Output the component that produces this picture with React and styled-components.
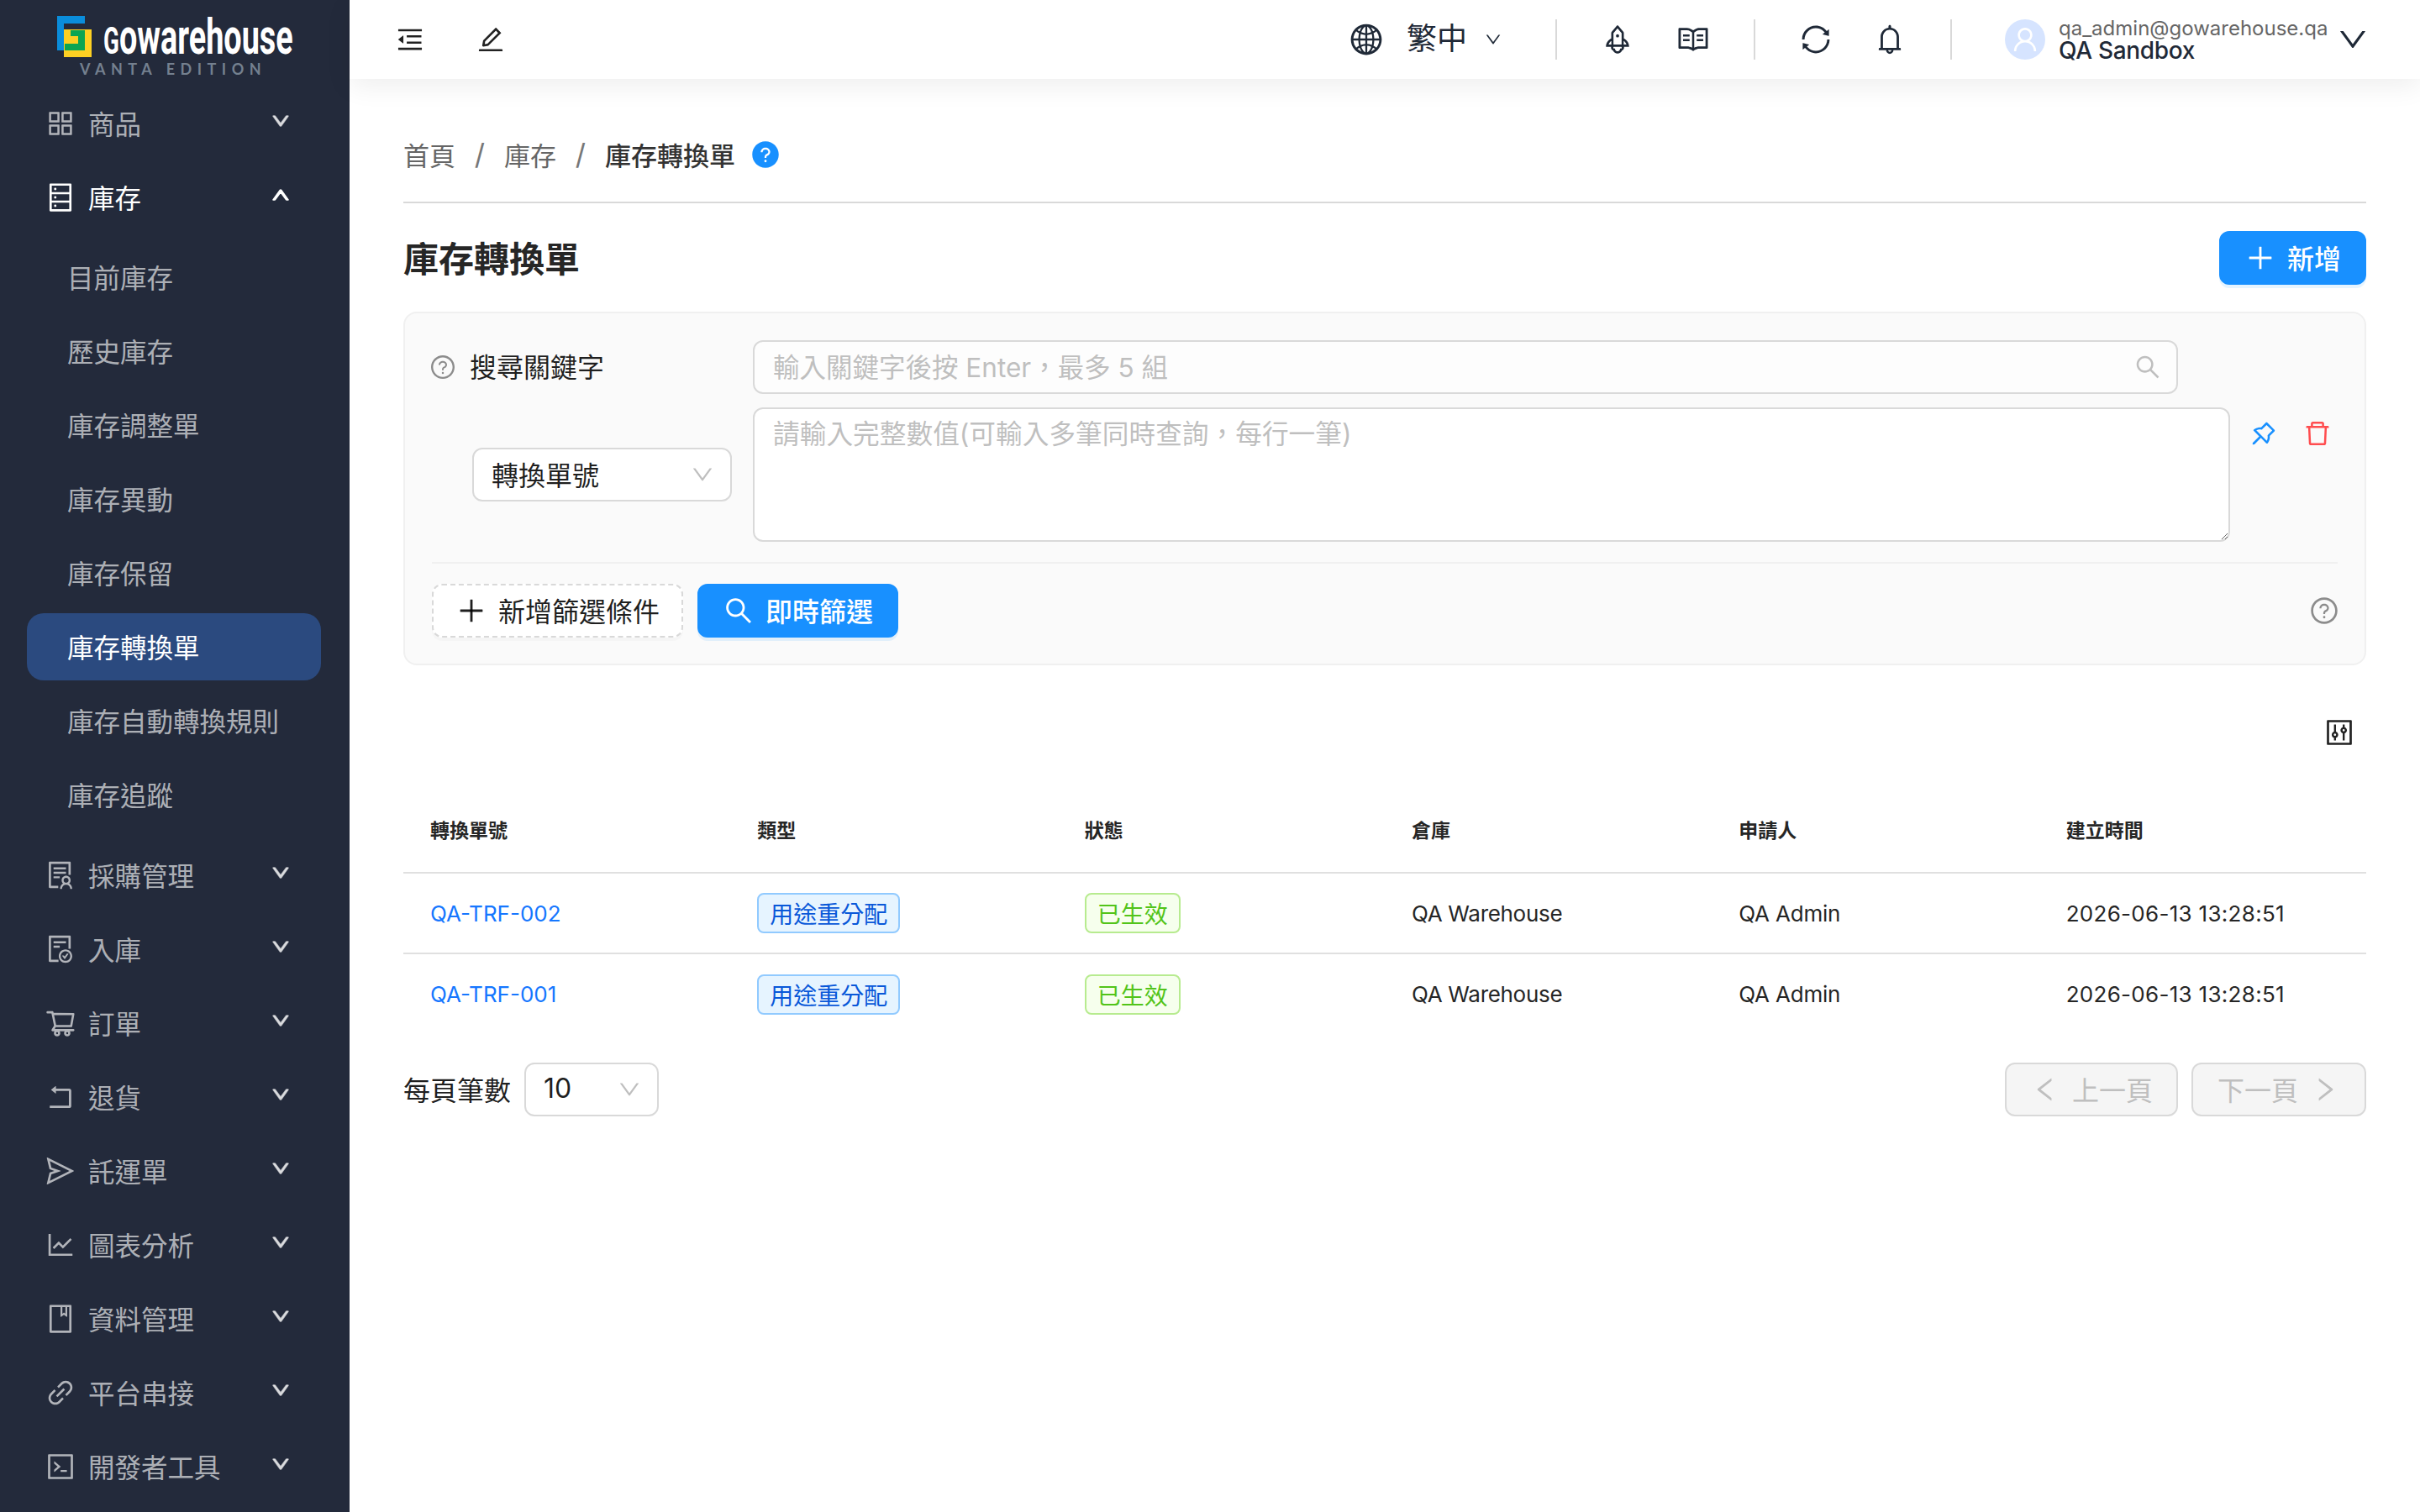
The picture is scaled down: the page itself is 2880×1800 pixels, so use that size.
import styled, { createGlobalStyle } from "styled-components";
import {
  AiOutlineAppstore,
  AiOutlineDatabase,
  AiOutlineSolution,
  AiOutlineFileDone,
  AiOutlineShoppingCart,
  AiOutlineRollback,
  AiOutlineSend,
  AiOutlineLineChart,
  AiOutlineBook,
  AiOutlineLink,
  AiOutlineCode,
  AiOutlineDown,
  AiOutlineUp,
  AiOutlineLeft,
  AiOutlineRight,
  AiOutlineMenuFold,
  AiOutlineEdit,
  AiOutlineGlobal,
  AiOutlineRocket,
  AiOutlineRead,
  AiOutlineSync,
  AiOutlineBell,
  AiOutlineUser,
  AiOutlineQuestionCircle,
  AiFillQuestionCircle,
  AiOutlinePlus,
  AiOutlineSearch,
  AiOutlinePushpin,
  AiOutlineDelete,
  AiOutlineControl,
} from "react-icons/ai";

const GlobalStyle = createGlobalStyle`
  * { box-sizing: border-box; }
  body {
    margin: 0;
    background: #fff;
    font-family: Inter, "Noto Sans CJK TC", sans-serif;
    color: rgba(0, 0, 0, 0.88);
  }
  svg { flex-shrink: 0; display: block; }
`;

const Layout = styled.div`
  display: flex;
  height: 100vh;
  overflow: hidden;
`;

const Sidebar = styled.aside`
  width: 416px;
  flex-shrink: 0;
  background: #232a3b;
  overflow: hidden;
`;

const LogoBlock = styled.div`
  height: 107px;
  padding: 19px 0 0 68px;
`;

const LogoRow = styled.div`
  display: flex;
  gap: 14px;
  height: 50px;
`;

const Wordmark = styled.div`
  width: 226px;
  height: 50px;
  font-family: Roboto, sans-serif;
  font-weight: 700;
  font-size: 60px;
  line-height: 50px;
  color: #fff;
  white-space: nowrap;
  transform: scaleX(0.63);
  transform-origin: left center;
  span { font-size: 44px; }
`;

const Edition = styled.div`
  margin: 5px 0 0 27px;
  font-family: Lato, sans-serif;
  font-weight: 700;
  font-size: 18px;
  line-height: 16px;
  letter-spacing: 6.5px;
  color: #74808f;
  white-space: nowrap;
`;

const Menu = styled.nav`
  display: flex;
  flex-direction: column;
  gap: 8px;
`;

const MenuItem = styled.div`
  height: 80px;
  flex-shrink: 0;
  display: flex;
  align-items: center;
  padding: 0 70px 0 58px;
  font-size: 31.5px;
  color: ${(p) => (p.$open ? "#fff" : "rgba(255, 255, 255, 0.65)")};
`;

const MenuIcon = styled.span`
  display: flex;
  width: 28px;
  margin-right: 19px;
  justify-content: center;
  font-size: 38px;
`;

const MenuLabel = styled.span`
  flex: 1;
  padding-bottom: 3px;
`;

const Caret = styled.span`
  display: flex;
  font-size: 24px;
  margin-top: -6px;
  svg {
    stroke: currentColor;
    stroke-width: 70;
  }
`;

const SubMenu = styled.div`
  display: flex;
  flex-direction: column;
  gap: 8px;
  margin: 15px 0 16px;
`;

const SubItem = styled.div`
  height: 80px;
  margin: 0 34px 0 32px;
  padding: 0 0 3px 48px;
  display: flex;
  align-items: center;
  font-size: 31.5px;
  border-radius: 20px;
  color: ${(p) => (p.$active ? "#fff" : "rgba(255, 255, 255, 0.65)")};
  background: ${(p) => (p.$active ? "#2b4a7f" : "transparent")};
`;

const Main = styled.main`
  flex: 1;
  min-width: 0;
  display: flex;
  flex-direction: column;
`;

const TopBar = styled.header`
  height: 94px;
  flex-shrink: 0;
  display: flex;
  align-items: center;
  padding: 0 60px 0 54px;
  background: #fff;
  box-shadow: 0 8px 32px rgba(0, 0, 0, 0.07);
  color: #1f2937;
`;

const TopIcons = styled.div`
  display: flex;
  align-items: center;
  gap: 60px;
  font-size: 36px;
  color: #222;
`;

const TopRight = styled.div`
  margin-left: auto;
  display: flex;
  align-items: center;
`;

const Lang = styled.div`
  display: flex;
  align-items: center;
  margin-right: 11px;
  font-size: 36px;
`;

const LangText = styled.span`
  margin: 0 20px 0 27px;
  line-height: 48px;
  padding-bottom: 3px;
`;

const BarDivider = styled.div`
  width: 2px;
  height: 48px;
  margin: 0 52px;
  background: #d9d9d9;
`;

const IconGroup = styled.div`
  display: flex;
  gap: ${(p) => p.$gap}px;
  font-size: 40px;
  color: #1f2937;
`;

const Avatar = styled.div`
  width: 48px;
  height: 48px;
  margin: 0 16px 0 11px;
  border-radius: 50%;
  background: #d6e4ff;
  color: #fff;
  display: flex;
  align-items: center;
  justify-content: center;
  font-size: 36px;
`;

const UserInfo = styled.div`
  width: 318px;
  white-space: nowrap;
`;

const UserMail = styled.div`
  font-size: 24px;
  line-height: 26px;
  color: #666;
`;

const UserName = styled.div`
  font-size: 28px;
  font-weight: 500;
  line-height: 27px;
  letter-spacing: -0.3px;
  color: #1f2937;
`;

const UserCaret = styled.span`
  display: flex;
  margin-left: 12px;
  font-size: 40px;
  color: #1f2937;
`;

const Content = styled.div`
  padding: 0 64px;
`;

const Breadcrumb = styled.div`
  display: flex;
  align-items: center;
  height: 148px;
  padding-top: 33px;
  border-bottom: 2px solid #d9d9d9;
  font-size: 31px;
  color: #666;
`;

const Crumb = styled.span`
  font-weight: ${(p) => (p.$current ? 500 : 400)};
  color: ${(p) => (p.$current ? "#333" : "#666")};
`;

const Slash = styled.span`
  width: 58px;
  text-align: center;
  font-family: Inter, sans-serif;
  font-size: 34px;
  color: #777;
`;

const HelpDot = styled.span`
  display: flex;
  margin-left: 18px;
  font-size: 36px;
  color: #1890ff;
`;

const TitleRow = styled.div`
  display: flex;
  align-items: center;
  justify-content: space-between;
  margin-top: 33px;
  height: 64px;
`;

const Title = styled.h1`
  margin: -4px 0 0;
  font-size: 42px;
  font-weight: 700;
  color: #262626;
`;

const Button = styled.button`
  height: 64px;
  display: inline-flex;
  align-items: center;
  gap: 13px;
  padding: 0 ${(p) => p.$pad || 28}px 3px;
  font-family: inherit;
  font-size: 32px;
  font-weight: ${(p) => (p.$primary ? 500 : 400)};
  border-radius: 12px;
  cursor: pointer;
  white-space: nowrap;
  ${(p) =>
    p.$primary
      ? `
    border: 2px solid #1890ff;
    background: #1890ff;
    color: #fff;
    box-shadow: 0 4px 0 rgba(5, 145, 255, 0.1);
  `
      : `
    border: 2px dashed #d9d9d9;
    background: #fff;
    color: rgba(0, 0, 0, 0.88);
    box-shadow: 0 4px 0 rgba(0, 0, 0, 0.02);
  `}
  svg { font-size: 38px; margin-top: 3px; }
`;

const FilterCard = styled.section`
  margin-top: 32px;
  padding: 32px 32px 32px;
  height: 421px;
  background: #fafafa;
  border: 2px solid #f0f0f0;
  border-radius: 16px;
`;

const FieldGrid = styled.div`
  display: grid;
  grid-template-columns: 382px 1fr;
  row-gap: 16px;
`;

const KeywordLabel = styled.div`
  display: flex;
  align-items: center;
  font-size: 32px;
  color: rgba(0, 0, 0, 0.88);
`;

const LabelText = styled.span`
  padding-bottom: 4px;
`;

const HintIcon = styled.span`
  display: flex;
  margin: 0 16px 0 -3px;
  font-size: 32px;
  color: #8c8c8c;
`;

const SearchField = styled.div`
  width: 1696px;
  height: 64px;
  padding: 0 17px 0 22px;
  display: flex;
  align-items: center;
  background: #fdfdfd;
  border: 2px solid #d9d9d9;
  border-radius: 12px;
  color: #bfbfbf;
  font-size: 34px;
`;

const SearchInput = styled.input`
  flex: 1;
  min-width: 0;
  padding: 0;
  border: 0;
  outline: 0;
  background: transparent;
  font-family: inherit;
  font-size: 31.5px;
  &::placeholder { color: #bfbfbf; opacity: 1; }
`;

const SelectBox = styled.div`
  width: ${(p) => p.$width}px;
  height: 64px;
  flex-shrink: 0;
  display: flex;
  align-items: center;
  justify-content: space-between;
  padding: 0 18px 3px 21px;
  background: #fff;
  border: 2px solid #d9d9d9;
  border-radius: 12px;
  font-size: 32px;
  svg { font-size: 30px; color: #bfbfbf; margin-top: 3px; }
`;

const SelectCell = styled.div`
  display: flex;
  align-items: center;
  padding-left: 48px;
`;

const ValueCell = styled.div`
  display: flex;
`;

const ValueArea = styled.textarea`
  width: 1758px;
  height: 160px;
  padding: 6px 22px;
  background: #fff;
  border: 2px solid #d9d9d9;
  border-radius: 12px;
  outline: 0;
  resize: vertical;
  font-family: inherit;
  font-size: 31.7px;
  line-height: 48px;
  &::placeholder { color: #bfbfbf; opacity: 1; }
`;

const RowActions = styled.div`
  display: flex;
  gap: 28px;
  margin: 13px 0 0 22px;
  font-size: 36px;
`;

const PinIcon = styled(AiOutlinePushpin)`
  color: #1890ff;
`;

const TrashIcon = styled(AiOutlineDelete)`
  color: #ff4d4f;
`;

const Separator = styled.div`
  height: 2px;
  margin: 24px 0 24px;
  background: #f0f0f0;
`;

const ActionRow = styled.div`
  display: flex;
  align-items: center;
  gap: 17px;
`;

const ActionHint = styled.span`
  display: flex;
  margin: 0 -2px 0 auto;
  font-size: 36px;
  color: #8c8c8c;
`;

const TableTools = styled.div`
  display: flex;
  justify-content: flex-end;
  margin-top: 61px;
  padding-right: 13px;
  font-size: 38px;
  color: #222;
`;

const Table = styled.table`
  width: 100%;
  margin-top: 50px;
  border-collapse: collapse;
  table-layout: fixed;
`;

const HeadCell = styled.th`
  height: 98px;
  padding: 0 32px 6px;
  text-align: left;
  font-size: 23px;
  font-weight: 700;
  color: #262626;
  border-bottom: 2px solid #e0e0e0;
`;

const Cell = styled.td`
  height: 96px;
  padding: 0 32px;
  font-size: 26px;
  letter-spacing: ${(p) => p.$spacing || 0}px;
  color: #262626;
`;

const Row = styled.tr`
  & + & td { border-top: 2px solid #e0e0e0; }
`;

const CodeLink = styled.a`
  color: #1677ff;
  text-decoration: none;
`;

const Tag = styled.span`
  display: inline-flex;
  align-items: center;
  height: 48px;
  padding: 0 13px;
  font-size: 28px;
  border-radius: 8px;
  border: 2px solid ${(p) => (p.$tone === "green" ? "#b7eb8f" : "#91caff")};
  background: ${(p) => (p.$tone === "green" ? "#f6ffed" : "#e6f4ff")};
  color: ${(p) => (p.$tone === "green" ? "#52c41a" : "#0958d9")};
`;

const Pagination = styled.div`
  display: flex;
  align-items: center;
  margin-top: 34px;
`;

const PageSizeLabel = styled.span`
  margin-right: 16px;
  padding-bottom: 3px;
  font-size: 32px;
`;

const PageButtons = styled.div`
  display: flex;
  gap: 16px;
  margin-left: auto;
`;

const PageButton = styled.button`
  width: ${(p) => p.$width}px;
  height: 64px;
  display: flex;
  align-items: center;
  justify-content: center;
  gap: 14px;
  padding: 0 0 3px;
  font-family: inherit;
  font-size: 32px;
  color: #bfbfbf;
  background: #f5f5f5;
  border: 2px solid #d9d9d9;
  border-radius: 12px;
  svg { font-size: 36px; margin-top: 3px; }
`;

const menuTop = [{ label: "商品", icon: AiOutlineAppstore }];

const subItems = [
  "目前庫存",
  "歷史庫存",
  "庫存調整單",
  "庫存異動",
  "庫存保留",
  "庫存轉換單",
  "庫存自動轉換規則",
  "庫存追蹤",
];

const menuRest = [
  { label: "採購管理", icon: AiOutlineSolution },
  { label: "入庫", icon: AiOutlineFileDone },
  { label: "訂單", icon: AiOutlineShoppingCart },
  { label: "退貨", icon: AiOutlineRollback },
  { label: "託運單", icon: AiOutlineSend },
  { label: "圖表分析", icon: AiOutlineLineChart },
  { label: "資料管理", icon: AiOutlineBook },
  { label: "平台串接", icon: AiOutlineLink },
  { label: "開發者工具", icon: AiOutlineCode },
];

const columns = ["轉換單號", "類型", "狀態", "倉庫", "申請人", "建立時間"];

const rows = [
  { code: "QA-TRF-002", time: "2026-06-13 13:28:51" },
  { code: "QA-TRF-001", time: "2026-06-13 13:28:51" },
];

function LogoMark() {
  return (
    <svg width="41" height="49" viewBox="68 19 41 49">
      <rect x="76" y="35" width="33" height="33" fill="#fdd023" />
      <path d="M68 19h33v9H76v32h-8z" fill="#0a8ddb" />
      <path d="M84 36h17v24H77v-8h16v-9h-9z" fill="#0ba552" />
    </svg>
  );
}

function NavItem({ item, open }) {
  const Icon = item.icon;
  return (
    <MenuItem $open={open}>
      <MenuIcon>
        <Icon />
      </MenuIcon>
      <MenuLabel>{item.label}</MenuLabel>
      <Caret>{open ? <AiOutlineUp /> : <AiOutlineDown />}</Caret>
    </MenuItem>
  );
}

export default function App() {
  return (
    <>
      <GlobalStyle />
      <Layout>
        <Sidebar>
          <LogoBlock>
            <LogoRow>
              <LogoMark />
              <Wordmark>
                <span>G</span>owarehouse
              </Wordmark>
            </LogoRow>
            <Edition>VANTA EDITION</Edition>
          </LogoBlock>
          <Menu>
            {menuTop.map((item) => (
              <NavItem key={item.label} item={item} />
            ))}
            <NavItem open item={{ label: "庫存", icon: AiOutlineDatabase }} />
          </Menu>
          <SubMenu>
            {subItems.map((label) => (
              <SubItem key={label} $active={label === "庫存轉換單"}>
                {label}
              </SubItem>
            ))}
          </SubMenu>
          <Menu>
            {menuRest.map((item) => (
              <NavItem key={item.label} item={item} />
            ))}
          </Menu>
        </Sidebar>

        <Main>
          <TopBar>
            <TopIcons>
              <AiOutlineMenuFold />
              <AiOutlineEdit />
            </TopIcons>
            <TopRight>
              <Lang>
                <AiOutlineGlobal size={42} />
                <LangText>繁中</LangText>
                <AiOutlineDown size={22} />
              </Lang>
              <BarDivider />
              <IconGroup $gap={50}>
                <AiOutlineRocket />
                <AiOutlineRead />
              </IconGroup>
              <BarDivider />
              <IconGroup $gap={48}>
                <AiOutlineSync />
                <AiOutlineBell />
              </IconGroup>
              <BarDivider />
              <Avatar>
                <AiOutlineUser />
              </Avatar>
              <UserInfo>
                <UserMail>qa_admin@gowarehouse.qa</UserMail>
                <UserName>QA Sandbox</UserName>
              </UserInfo>
              <UserCaret>
                <AiOutlineDown />
              </UserCaret>
            </TopRight>
          </TopBar>

          <Content>
            <Breadcrumb>
              <Crumb>首頁</Crumb>
              <Slash>/</Slash>
              <Crumb>庫存</Crumb>
              <Slash>/</Slash>
              <Crumb $current>庫存轉換單</Crumb>
              <HelpDot>
                <AiFillQuestionCircle />
              </HelpDot>
            </Breadcrumb>

            <TitleRow>
              <Title>庫存轉換單</Title>
              <Button $primary>
                <AiOutlinePlus />
                新增
              </Button>
            </TitleRow>

            <FilterCard>
              <FieldGrid>
                <KeywordLabel>
                  <HintIcon>
                    <AiOutlineQuestionCircle />
                  </HintIcon>
                  <LabelText>搜尋關鍵字</LabelText>
                </KeywordLabel>
                <SearchField>
                  <SearchInput placeholder="輸入關鍵字後按 Enter，最多 5 組" />
                  <AiOutlineSearch />
                </SearchField>
                <SelectCell>
                  <SelectBox $width={309}>
                    轉換單號
                    <AiOutlineDown />
                  </SelectBox>
                </SelectCell>
                <ValueCell>
                  <ValueArea placeholder="請輸入完整數值(可輸入多筆同時查詢，每行一筆)" />
                  <RowActions>
                    <PinIcon />
                    <TrashIcon />
                  </RowActions>
                </ValueCell>
              </FieldGrid>
              <Separator />
              <ActionRow>
                <Button $pad={26}>
                  <AiOutlinePlus />
                  新增篩選條件
                </Button>
                <Button $primary>
                  <AiOutlineSearch />
                  即時篩選
                </Button>
                <ActionHint>
                  <AiOutlineQuestionCircle />
                </ActionHint>
              </ActionRow>
            </FilterCard>

            <TableTools>
              <AiOutlineControl />
            </TableTools>

            <Table>
              <thead>
                <tr>
                  {columns.map((name) => (
                    <HeadCell key={name}>{name}</HeadCell>
                  ))}
                </tr>
              </thead>
              <tbody>
                {rows.map((row) => (
                  <Row key={row.code}>
                    <Cell>
                      <CodeLink href="#">{row.code}</CodeLink>
                    </Cell>
                    <Cell>
                      <Tag>用途重分配</Tag>
                    </Cell>
                    <Cell>
                      <Tag $tone="green">已生效</Tag>
                    </Cell>
                    <Cell $spacing={-0.3}>QA Warehouse</Cell>
                    <Cell $spacing={-0.2}>QA Admin</Cell>
                    <Cell $spacing={0.3}>{row.time}</Cell>
                  </Row>
                ))}
              </tbody>
            </Table>

            <Pagination>
              <PageSizeLabel>每頁筆數</PageSizeLabel>
              <SelectBox $width={160}>
                10
                <AiOutlineDown />
              </SelectBox>
              <PageButtons>
                <PageButton $width={206}>
                  <AiOutlineLeft />
                  上一頁
                </PageButton>
                <PageButton $width={208}>
                  下一頁
                  <AiOutlineRight />
                </PageButton>
              </PageButtons>
            </Pagination>
          </Content>
        </Main>
      </Layout>
    </>
  );
}
